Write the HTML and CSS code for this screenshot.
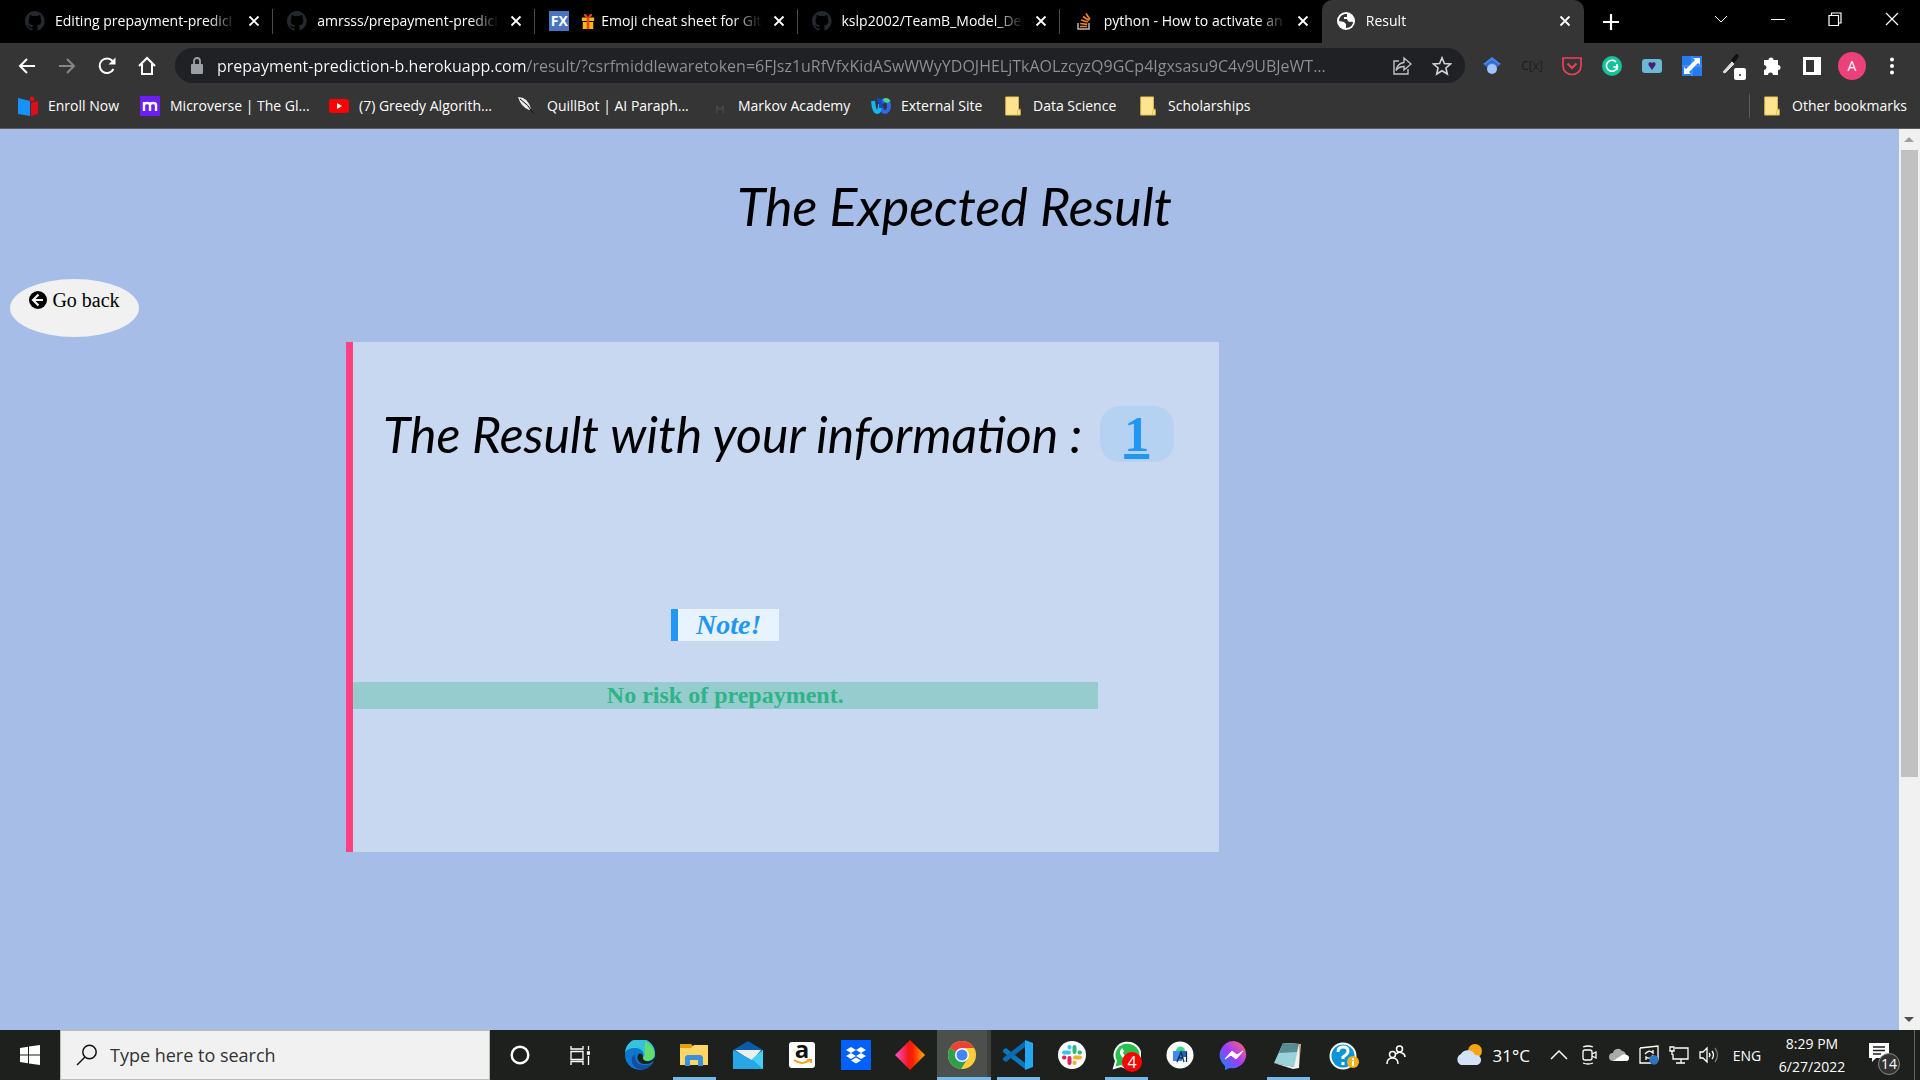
FILE: index.html
```html
<!DOCTYPE html>
<html lang="en">
<head>
<meta charset="utf-8">
<title>Result</title>
<link rel="stylesheet" href="styles.css">
</head>
<body>
<svg class="defs" aria-hidden="true">
  <symbol id="github" viewBox="0 0 16 16"><path fill="#24292f" d="M8 0C3.6 0 0 3.6 0 8c0 3.500 2.300 6.500 5.500 7.600.4.100.5-.2.5-.4v-1.500c-2 .4-2.600-.5-2.700-1-.1-.2-.5-.9-.8-1.100-.3-.1-.7-.5 0-.5.6 0 1.100.6 1.200.8.7 1.200 1.900.9 2.300.7.1-.5.3-.9.5-1.100-1.800-.2-3.600-.9-3.600-4 0-.9.3-1.600.8-2.100-.1-.2-.4-1 .1-2.100 0 0 .7-.2 2.200.8a7.500 7.500 0 0 1 4 0c1.500-1 2.200-.8 2.200-.8.4 1.100.2 1.900.1 2.100.5.5.8 1.200.8 2.100 0 3.100-1.900 3.700-3.700 3.900.3.300.6.8.6 1.500v2.200c0 .2.1.5.5.4A8 8 0 0 0 8 0"/></symbol>
  <symbol id="close" viewBox="0 0 12 12"><path d="M1.500 1.500l9 9m0-9l-9 9" fill="none" stroke="#fff" stroke-width="1.800"/></symbol>
  <symbol id="folder" viewBox="0 0 20 22"><path d="M2 1h14v14h2v6H2z" fill="#ffe48f" stroke="#e3bd4d"/><path d="M15 21v-5l3-2" fill="none" stroke="#e3bd4d"/></symbol>
</svg>

<header class="browser">
  <div class="titlebar">
    <nav class="tabs" aria-label="Tabs">
      <div class="tab"><svg class="i20"><use href="#github"/></svg><span class="title">Editing prepayment-predici</span><button aria-label="Close tab"><svg class="i12"><use href="#close"/></svg></button></div>
      <div class="tab"><svg class="i20"><use href="#github"/></svg><span class="title">amrsss/prepayment-predici</span><button aria-label="Close tab"><svg class="i12"><use href="#close"/></svg></button></div>
      <div class="tab"><span class="fx">FX</span><span class="title"><svg class="gift" viewBox="0 0 16 18"><path fill="#ffb900" d="M1 5h14v4H1zM2 10h12v8H2z"/><path fill="#e8432e" d="M6.500 5h3v13h-3zM8 5C3 5 2 0 5 1c2 .5 3 4 3 4s1-3.500 3-4c3-1 2 4-3 4"/></svg>Emoji cheat sheet for Git</span><button aria-label="Close tab"><svg class="i12"><use href="#close"/></svg></button></div>
      <div class="tab"><svg class="i20"><use href="#github"/></svg><span class="title">kslp2002/TeamB_Model_Dep</span><button aria-label="Close tab"><svg class="i12"><use href="#close"/></svg></button></div>
      <div class="tab"><svg class="i20" viewBox="0 0 20 20" fill="none"><path d="M4 12v6h11v-6" stroke="#bcbbbb" stroke-width="1.500"/><path d="M6 15.500h7M6.200 12.500l7 .8M7 9l6.800 2M9 5.500l6 4M12 2.500l4 6" stroke="#f48024" stroke-width="1.700"/></svg><span class="title">python - How to activate an</span><button aria-label="Close tab"><svg class="i12"><use href="#close"/></svg></button></div>
      <div class="tab active"><svg class="i20" viewBox="0 0 20 20"><circle cx="10" cy="10" r="9" fill="#fff"/><path d="M9 3C5 4 3 7 3 10l5 1 2 2v4c4 0 7-3 7-6l-4-1-1-2H8V6h3V3z" fill="#353535"/><path d="M10 7h5l2 3-4 1z" fill="#fff"/></svg><span class="title">Result</span><button aria-label="Close tab"><svg class="i12"><use href="#close"/></svg></button></div>
    </nav>
    <button class="newtab" aria-label="New tab"><svg class="i16" viewBox="0 0 16 16"><path d="M8 0v16M0 8h16" stroke="#fff" stroke-width="2.200"/></svg></button>
    <div class="window">
      <button aria-label="Search tabs"><svg class="i14" viewBox="0 0 14 14"><path d="M1 4l6 6 6-6" fill="none" stroke="#fff"/></svg></button>
      <button aria-label="Minimize"><svg class="i14" viewBox="0 0 14 14"><path d="M0 7.500h14" stroke="#fff"/></svg></button>
      <button aria-label="Restore"><svg class="i14" viewBox="0 0 14 14"><path d="M1 3.500h9.500V13.500H1zM3.500 3.500V1H13v10h-2.500" fill="none" stroke="#fff" stroke-width="1.200"/></svg></button>
      <button aria-label="Close"><svg class="i14" viewBox="0 0 14 14"><path d="M1 1l12 12M13 1L1 13" stroke="#fff" stroke-width="1.200"/></svg></button>
    </div>
  </div>

  <div class="toolbar">
    <button aria-label="Back"><svg class="i20" viewBox="0 0 20 20"><path d="M18 10H3M10 3l-7 7 7 7" fill="none" stroke="#fff" stroke-width="2"/></svg></button>
    <button aria-label="Forward"><svg class="i20" viewBox="0 0 20 20"><path d="M2 10h15M10 3l7 7-7 7" fill="none" stroke="#868686" stroke-width="2"/></svg></button>
    <button aria-label="Reload"><svg class="i20" viewBox="0 0 20 20"><path d="M16.500 13A7.300 7.300 0 1 1 15.500 5" fill="none" stroke="#fff" stroke-width="2"/><path d="M18.500 1.500v7h-7z" fill="#fff"/></svg></button>
    <button aria-label="Home"><svg class="i20" viewBox="0 0 20 20"><path d="M2 10l8-8 8 8M5 8v10h10V8" fill="none" stroke="#fff" stroke-width="2"/></svg></button>
    <div class="omnibox">
      <svg class="i20" viewBox="0 0 20 20"><rect x="4" y="8" width="12" height="10" rx="1" fill="#9aa0a6"/><path d="M7 8V5a3 3 0 0 1 6 0v3" fill="none" stroke="#9aa0a6" stroke-width="1.800"/></svg>
      <input class="url" type="text" aria-label="Address" value="prepayment-prediction-b.herokuapp.com/result/?csrfmiddlewaretoken=6FJsz1uRfVfxKidASwWWyYDOJHELjTkAOLzcyzQ9GCp4Igxsasu9C4v9UBJeWT...">
      <button aria-label="Share"><svg class="i20" viewBox="0 0 20 20"><path d="M7 5H2v13h14v-5M12 2l7 6-7 6v-3.500c-4 0-6 1-8 4 1-5 4-7.500 8-8z" fill="none" stroke="#bdc1c6" stroke-width="1.400"/></svg></button>
      <button aria-label="Bookmark"><svg class="i20" viewBox="0 0 20 20"><path d="M10 1.800l2.400 5.700 6.100.5-4.600 4 1.400 6L10 14.800 4.700 18l1.400-6-4.600-4 6.100-.5z" fill="none" stroke="#d2d4d7" stroke-width="1.600"/></svg></button>
    </div>
    <div class="extensions">
      <button aria-label="Scholar"><svg class="i20" viewBox="0 0 20 20"><path d="M10 1l9 7-5 3H6L1 8z" fill="#4285f4"/><circle cx="10" cy="13" r="5" fill="#a0c3ff"/><path d="M5 12a5 5 0 0 1 10 0l2-3-7-5-7 5z" fill="#356ac3"/></svg></button>
      <button aria-label="Formula" class="cx">C[x]</button>
      <button aria-label="Pocket"><svg class="i20" viewBox="0 0 20 20"><path d="M1 2h18v8a9 8.500 0 0 1-18 0z" fill="none" stroke="#ef4056" stroke-width="1.700"/><path d="M5.500 7.500L10 12l4.500-4.500" fill="none" stroke="#ef4056" stroke-width="2"/></svg></button>
      <button aria-label="Grammarly"><svg class="i20" viewBox="0 0 20 20"><circle cx="10" cy="10" r="10" fill="#15c39a"/><path d="M14 6a5.500 5.500 0 1 0 1.300 5h-4M15 8v6" fill="none" stroke="#fff" stroke-width="1.700"/></svg></button>
      <button aria-label="Video"><svg class="i20" viewBox="0 0 20 20"><rect y="3" width="20" height="14" rx="3" fill="#6bb7d6"/><path d="M6.500 7l2-1L10 7l1.500-1 2 1v2L10 14 6.500 9z" fill="#47206c"/></svg></button>
      <button aria-label="Resize"><svg class="i20" viewBox="0 0 20 20"><path d="M0 0h20v20H0z" fill="#247cf0"/><path d="M10 0v20M0 10h20" stroke="#5ba1fa"/><path d="M18 2v7l-2-2-9 9 2 2H2v-7l2 2 9-9-2-2z" fill="#fff"/></svg></button>
      <button aria-label="Color picker"><svg class="i28" viewBox="0 0 28 28"><path d="M5 20L14 10l2 2-9 9z" fill="#ddd" stroke="#ddd"/><path d="M13 8l5-6q4 0 2 4l-4 5z" fill="#111"/><rect x="16" y="16" width="12" height="12" rx="2" fill="#fff"/><circle cx="22" cy="23" r="1" fill="#222"/></svg></button>
      <button aria-label="Extensions"><svg class="i20" viewBox="0 0 20 20"><path d="M2 4h4.500a2.500 2.500 0 1 1 5 0H16v5a2.500 2.500 0 1 1 0 5v5h-5a2.500 2.500 0 0 0-5 0H2v-5a2.500 2.500 0 0 0 0-5z" fill="#fff"/></svg></button>
      <button aria-label="Side panel"><svg class="i20" viewBox="0 0 20 20"><path d="M1 1h18v18H1zM4 4v12h8V4z" fill="#fff" fill-rule="evenodd"/></svg></button>
      <button aria-label="Profile"><span class="avatar">A</span></button>
      <button aria-label="Menu"><svg class="i20" viewBox="0 0 20 20" fill="#fff"><circle cx="10" cy="3.500" r="2"/><circle cx="10" cy="10" r="2"/><circle cx="10" cy="16.500" r="2"/></svg></button>
    </div>
  </div>

  <nav class="bookmarks" aria-label="Bookmarks">
    <div class="marks">
      <a href="#"><svg class="i20" viewBox="0 0 20 20"><path d="M0 2l12 3v15L0 18z" fill="#1693fb"/><path d="M13 7l7-2v13l-7 2z" fill="#df0d18"/><circle cx="14" cy="3" r="2.500" fill="#df0d18"/></svg>Enroll Now</a>
      <a href="#"><svg class="i20" viewBox="0 0 20 20"><path d="M0 0h20v20H0z" fill="#6d1df5"/><path d="M4 15V6m0 3q0-2 3-2t3 2v6m0-6q0-2 3-2t3 2v6" fill="none" stroke="#fff" stroke-width="2.400"/></svg>Microverse | The Gl...</a>
      <a href="#"><svg class="i20" viewBox="0 0 20 20"><rect y="3" width="20" height="14" rx="3" fill="#f00"/><path d="M8 7l5 3-5 3z" fill="#fff"/></svg>(7) Greedy Algorith...</a>
      <a href="#"><svg class="i20" viewBox="0 0 20 20"><path d="M1 1q10 0 13 12l-2 1Q4 11 1 1" fill="#e8e8e8"/><path d="M3 3q8 5 14 15" fill="none" stroke="#111"/></svg>QuillBot | AI Paraph...</a>
      <a href="#"><svg class="i20" viewBox="0 0 20 20"><path d="M9 17V10l3 4 3-4v7" fill="none" stroke="#555"/></svg>Markov Academy</a>
      <a href="#"><svg class="i20" viewBox="0 0 20 20" fill="none" stroke-width="4"><ellipse cx="14" cy="10" rx="4" ry="6" stroke="#2c69f5"/><path d="M13 5q3-2 5 1" stroke="#46db89"/><path d="M2 5q1 11 4 11t3-8" stroke="#12b9ec"/><path d="M6 4q4-1 4 8" stroke="#1645c8"/></svg>External Site</a>
      <a href="#"><svg class="i20"><use href="#folder"/></svg>Data Science</a>
      <a href="#"><svg class="i20"><use href="#folder"/></svg>Scholarships</a>
    </div>
    <a href="#" class="other"><svg class="i20"><use href="#folder"/></svg>Other bookmarks</a>
  </nav>
</header>

<div class="viewport">
  <main>
    <h1>The Expected Result</h1>
    <button class="goback"><svg class="i18" viewBox="0 0 18 18"><circle cx="9" cy="9" r="9"/><path d="M9.500 3.500L4 9l5.500 5.500M4 9h10" fill="none" stroke="#f1f1f1" stroke-width="2.200"/></svg>Go back</button>
    <section class="card">
      <div class="result"><h2>The Result with your information :</h2><strong>1</strong></div>
      <div class="details">
        <p class="note">Note!</p>
        <p class="message">No risk of prepayment.</p>
      </div>
    </section>
  </main>
  <div class="scrollbar" aria-hidden="true">
    <svg class="i20" viewBox="0 0 20 20"><path d="M5 13h10l-5-5z" fill="#a0a0a0"/></svg>
    <div class="track"><div class="thumb"></div></div>
    <svg class="i20" viewBox="0 0 20 20"><path d="M5 7h10l-5 5z" fill="#505050"/></svg>
  </div>
</div>

<footer class="taskbar">
  <button class="start" aria-label="Start"><svg class="i20" viewBox="0 0 20 20" fill="#fff"><path d="M0 3l8-1.200V9.500H0zM9 1.600L20 0v9.500H9zM0 10.500h8v7.800L0 17zM9 10.500h11V20L9 18.400z"/></svg></button>
  <label class="search"><svg class="i22" viewBox="0 0 22 22"><circle cx="13.500" cy="8" r="6.700" fill="none" stroke="#111" stroke-width="1.500"/><path d="M9 13l-8 8" stroke="#111" stroke-width="1.500"/></svg><input type="text" placeholder="Type here to search" aria-label="Type here to search"></label>
  <div class="system">
    <button aria-label="Cortana"><svg class="i20" viewBox="0 0 20 20"><circle cx="10" cy="10" r="8.300" fill="none" stroke="#fff" stroke-width="2.400"/></svg></button>
    <button aria-label="Task view"><svg class="i20" viewBox="0 0 20 20" fill="none" stroke="#fff" stroke-width="1.300"><path d="M1 1v3h12V1M1 6.500h12v8H1zM1 20v-3.500h12V20M18.500 1v4M18.500 11v9"/><path d="M17.500 7h2v2h-2z" fill="#fff"/></svg></button>
  </div>
  <div class="apps">
    <button aria-label="Edge"><svg class="i30" viewBox="0 0 30 30"><circle cx="15" cy="15" r="15" fill="#0c78d0"/><path d="M0 13A15 15 0 0 1 30 14c0 5-3 7-8 7-4 0-5-2-4-4 2-5-2-9-8-9-5 0-9 2-10 5" fill="#35c2dc"/><path d="M20 2c9 3 11 13 8 16-2 3-9 4-10 1l2-3z" fill="#63df68"/><path d="M11 14c-3 8 4 14 15 10-5 8-17 7-19-2-1-5 1-7 4-8" fill="#124f9c"/><path d="M13 15c-2 4 1 9 7 9 4 0 7-1 8-3l2 2v-6l-3 3c-6 3-10 0-9-4-1-3-4-3-5-1" fill="#1d211c"/></svg></button>
    <button class="open" aria-label="File Explorer"><svg class="i30" viewBox="0 0 30 30"><path d="M1 4h11l3 3h14v18H1z" fill="#dfa111"/><path d="M1 8h11l3-3h14v20H1z" fill="#ffd566"/><path d="M6 26V17l2-2h14l2 2v9h-5v-6h-8v6z" fill="#3a91da"/></svg></button>
    <button aria-label="Mail"><svg class="i30" viewBox="0 0 30 30"><path d="M0 10L15 1l15 9v10H0z" fill="#0a5ba8"/><path d="M2 10h26l-9 11z" fill="#eee"/><path d="M0 10l19 10 11-10v19H0z" fill="#27a7e5"/><path d="M19 19l11-9v19z" fill="#45cff4"/></svg></button>
    <button aria-label="Amazon"><svg class="i30" viewBox="0 0 30 30"><rect x="2" y="2" width="26" height="26" rx="3" fill="#fff"/><text x="15" y="18" class="amazon">a</text><path d="M7 20q8 6 16 0M20 20h4v3" fill="none" stroke="#f7a01c" stroke-width="2"/></svg></button>
    <button aria-label="Dropbox"><svg class="i30" viewBox="0 0 30 30"><path d="M0 0h30v30H0z" fill="#0061fe"/><path d="M10 7l5 3-5 3-5-3zM20 7l5 3-5 3-5-3zM10 13l5 3-5 3-5-3zM20 13l5 3-5 3-5-3zM15 17.500l5 3-5 3-5-3z" fill="#fff"/></svg></button>
    <button aria-label="Diamond"><svg class="i30" viewBox="0 0 30 30"><defs><linearGradient id="dg"><stop stop-color="#ff4fd0"/><stop offset=".45" stop-color="#f01818"/><stop offset=".6" stop-color="#ff2100"/><stop offset="1" stop-color="#ffb000"/></linearGradient></defs><path d="M15 0l15 15-15 15L0 15z" fill="url(#dg)"/></svg></button>
    <button class="open current" aria-label="Chrome"><svg class="i28" viewBox="0 0 28 28"><circle cx="14" cy="14" r="14" fill="#ffcd3c"/><path d="M14 14L2 7a14 14 0 0 1 24 0z" fill="#ea4335"/><path d="M14 14L2 7a14 14 0 0 0 11 21l7-11z" fill="#2d9f4e"/><path d="M14 7h12l-6 8z" fill="#ffcd3c"/><path d="M2 7A14 14 0 0 1 26 7H14z" fill="#ea4335"/><circle cx="14" cy="14" r="7" fill="#fff"/><circle cx="14" cy="14" r="5.500" fill="#4285f4"/></svg></button>
    <button class="open" aria-label="Visual Studio Code"><svg class="i30" viewBox="0 0 30 30"><path d="M0 10l3-2 19 15v6L0 12z" fill="#0879bf"/><path d="M0 20l3 2L22 7V1L0 18z" fill="#0a6bb0"/><path d="M22 0l8 3v24l-8 3z" fill="#26a7f2"/></svg></button>
    <button aria-label="Slack"><svg class="i28" viewBox="0 0 28 28" stroke-width="4" stroke-linecap="round"><circle cx="14" cy="14" r="14" fill="#fff"/><path d="M6 11.500h5M11.500 6v.5" stroke="#36c5f0"/><path d="M16.500 6v5M22 11.500h-.5" stroke="#2eb67d"/><path d="M22 16.500h-5M16.500 22v-.5" stroke="#ecb22e"/><path d="M11.500 22v-5M6 16.500h.5" stroke="#e01e5a"/></svg></button>
    <button class="open" aria-label="WhatsApp, 4 unread"><svg class="i30" viewBox="0 0 30 30"><path d="M3 28l2-7A13 12.500 0 1 1 10 26z" fill="#2ac04f" stroke="#fff" stroke-width="2"/><path d="M11 8q-5 5 2 11t10 1l-3-3-3 1q-4-2-5-5l1-2z" fill="#fff"/></svg><span class="badge">4</span></button>
    <button aria-label="Android Studio"><svg class="i28" viewBox="0 0 28 28"><circle cx="14" cy="14" r="13.500" fill="#fff"/><path d="M10 10a4.500 4.500 0 0 1 9 0" fill="#3ddc84"/><path d="M7 10h9v10H7z" fill="#4285f4"/><path d="M16 10h5v6h-5z" fill="#2b5fc0"/><path d="M11 21l4-10 3 10M12.500 17h5M20.500 11v10" fill="none" stroke="#073042" stroke-width="1.300"/></svg></button>
    <button aria-label="Messenger"><svg class="i30" viewBox="0 0 30 30"><defs><linearGradient id="mg" x1="0" y1="1" x2="1" y2="0"><stop stop-color="#0a8cff"/><stop offset=".5" stop-color="#a13bff"/><stop offset="1" stop-color="#ff6b63"/></linearGradient></defs><path d="M15 1a14 13.500 0 1 1-4 27l-5 2v-4A14 14 0 0 1 15 1" fill="url(#mg)"/><path d="M6 19l7-8 5 4 6-4-7 8-5-4z" fill="#fff" stroke="#fff"/></svg></button>
    <button class="open" aria-label="Notepad"><svg class="i30" viewBox="0 0 30 30"><path d="M12 3l16 1-2 24-5-1z" fill="#ceb488"/><path d="M10 3l16 1-5 23L1 23z" fill="#9ad2d9"/><path d="M10 3l16 1-2 8L6 13z" fill="#558b94"/><path d="M1 23l20 4 5-23v24l-6 1z" fill="#e8f4f5"/></svg></button>
    <button class="help" aria-label="Help"><svg class="i30" viewBox="0 0 30 30"><circle cx="14" cy="16" r="12.500" fill="#0a95d8" stroke="#fff" stroke-width="2"/><path d="M9 12q0-5 5-5t5 4q0 3-5 6v2M14 22v3" fill="none" stroke="#fff" stroke-width="3"/><circle cx="24" cy="22" r="6" fill="#f5b21c"/><path d="M24 18v2m0 1v5" stroke="#fff" stroke-width="2"/></svg></button>
    <button class="people" aria-label="People"><svg class="i20" viewBox="0 0 20 20" fill="none" stroke="#fff" stroke-width="1.500"><circle cx="6.500" cy="9.500" r="3"/><path d="M1 19q0-6 5.500-6t5.500 6"/><circle cx="13.500" cy="4" r="3"/><path d="M10 9q3-3 6-1 3 1 3 4"/></svg></button>
  </div>
  <div class="tray">
    <button class="weather"><svg class="i28" viewBox="0 0 28 28"><circle cx="20" cy="10" r="7" fill="#f8a511"/><path d="M6 24a6 6 0 0 1 0-11 8 8 0 0 1 14 1 5 5 0 0 1 2 10z" fill="#d4e2f8"/></svg>31°C</button>
    <div class="status">
      <button aria-label="Hidden icons"><svg class="i20" viewBox="0 0 20 20"><path d="M2 14l8-8 8 8" fill="none" stroke="#fff" stroke-width="1.500"/></svg></button>
      <button aria-label="Meet now"><svg class="i20" viewBox="0 0 20 20" fill="none" stroke="#fff" stroke-width="1.300"><rect x="4" y="5" width="9" height="10" rx="2"/><path d="M13 9l4-2v6l-4-2M4 2q5-2 10 0M4 18q5 2 10 0"/></svg></button>
      <button aria-label="OneDrive"><svg class="i20" viewBox="0 0 20 20"><path d="M4 16a4 4 0 0 1 0-8 5 5 0 0 1 9-2q3 0 4 4a3 3 0 0 1 0 6z" fill="#aaa"/><path d="M4 16l9-6q4-2 7 2 0 4-3 4z" fill="#fff"/></svg></button>
      <button aria-label="Update"><svg class="i20" viewBox="0 0 20 20" fill="none" stroke="#fff" stroke-width="1.300"><path d="M1 3l18-2v14M1 3v15h11M6 9q4-5 8-1V5M14 10q-3 5-7 2v3"/><circle cx="15" cy="15" r="4" fill="#2c75c4" stroke="#2c75c4"/></svg></button>
      <button aria-label="Network"><svg class="i20" viewBox="0 0 20 20" fill="none" stroke="#fff" stroke-width="1.300"><path d="M6 3h13v11H4V9M12 14v4M7 18h9M1 2h4v4H1zM3 6v4"/></svg></button>
      <button aria-label="Volume"><svg class="i20" viewBox="0 0 20 20" fill="none" stroke="#fff" stroke-width="1.300"><path d="M1 7h3l4-4v14l-4-4H1zM10 8q2 2 0 4M13 6q3 4 0 8"/><path d="M16 3q5 7 0 14" stroke="#777"/></svg></button>
    </div>
    <button class="lang">ENG</button>
    <button class="clock"><time>8:29 PM</time><time>6/27/2022</time></button>
    <button class="notify" aria-label="14 notifications"><svg class="i22" viewBox="0 0 22 22"><path d="M1 2h20v15H8l-4 4v-4H1z" fill="#fff"/><path d="M5 6h12M5 9.500h12M5 13h8" stroke="#1d1d1d" stroke-width="1.300"/></svg><span class="count">14</span></button>
  </div>
</footer>
</body>
</html>
```
FILE: styles.css
```css
* { box-sizing: border-box; }
body {
  margin: 0;
  min-height: 100vh;
  display: flex;
  flex-direction: column;
  background: #a6bde7;
  font-family: "Open Sans", sans-serif;
  font-size: 14px;
  color: #fff;
}
button, input { font: inherit; color: inherit; border: 0; padding: 0; background: none; }
button { display: flex; align-items: center; justify-content: center; }
a { color: inherit; text-decoration: none; }
svg { display: block; flex: none; }
.defs { width: 0; height: 0; position: absolute; }
.i12 { width: 12px; height: 12px; }
.i14 { width: 14px; height: 14px; }
.i16 { width: 16px; height: 16px; }
.i18 { width: 18px; height: 18px; }
.i20 { width: 20px; height: 20px; }
.i22 { width: 22px; height: 22px; }
.i28 { width: 28px; height: 28px; }
.i30 { width: 30px; height: 30px; }

/* Browser frame */
.browser { background: #353535; border-bottom: 1px solid #5b5b5b; }
.titlebar { display: flex; height: 43px; background: #000; padding-left: 11px; }
.tabs { display: flex; flex: 0 1 1573px; min-width: 0; }
.tab {
  flex: 1 1 0;
  min-width: 0;
  display: flex;
  align-items: center;
  padding: 0 10px 2px 14px;
  position: relative;
}
.tab::after { content: ""; position: absolute; right: 0; top: 9px; width: 1px; height: 25px; background: #4a4a4a; }
.tab:nth-last-child(-n+2)::after { display: none; }
.tab.active { background: #353535; border-radius: 10px 10px 0 0; }
.title {
  flex: 1;
  min-width: 0;
  margin: 0 4px 0 10px;
  display: flex;
  align-items: center;
  white-space: nowrap;
  overflow: hidden;
  -webkit-mask-image: linear-gradient(90deg, #000 82%, transparent 98%);
  mask-image: linear-gradient(90deg, #000 82%, transparent 98%);
}
.gift { width: 14px; height: 16px; margin: 0 6px 0 2px; }
.fx { width: 20px; height: 20px; background: #4b74c0; font-weight: 700; line-height: 20px; text-align: center; }
.tab button { width: 18px; height: 20px; }
.newtab { width: 54px; }
.window { display: flex; margin-left: auto; padding-bottom: 6px; }
.window button { width: 57px; }

.toolbar { display: flex; align-items: center; height: 44px; padding: 1px 8px 0 7px; }
.toolbar button { flex: none; width: 40px; height: 35px; }
.omnibox {
  flex: 1;
  min-width: 0;
  height: 35px;
  display: flex;
  align-items: center;
  margin: 0 7px 0 8px;
  padding: 0 3px 0 12px;
  border-radius: 18px;
  background: #202124;
}
.url {
  flex: 1;
  min-width: 0;
  margin-left: 10px;
  font-size: 16px;
  text-overflow: ellipsis;
  background: linear-gradient(90deg, #fff 309px, #8e9196 309px);
  -webkit-background-clip: text;
  background-clip: text;
  color: transparent;
}
.extensions { display: flex; }
.cx { font-size: 12px; color: #1c1f22; }
.avatar { width: 28px; height: 28px; border-radius: 50%; background: #ec407a; line-height: 28px; text-align: center; }

.bookmarks { display: flex; align-items: center; justify-content: space-between; height: 41px; padding: 0 13px 4px 18px; }
.marks { display: grid; grid-template-columns: 122px 189px 188px 191px 163px 132px 135px auto; }
.bookmarks a { display: flex; align-items: center; gap: 10px; white-space: nowrap; line-height: 24px; }
.other { border-left: 1px solid #5b5b5b; padding-left: 12px; }

/* Page */
.viewport { flex: 1; display: flex; }
main { flex: 1; min-width: 0; padding: 47px 0 60px 10px; color: #000; font-family: "Liberation Serif", serif; }
h1, h2 { margin: 0; font-family: Lato, cursive; font-style: italic; font-weight: 400; line-height: 60px; color: #000; white-space: nowrap; }
h1 { font-size: 52px; text-align: center; }
h2 { font-size: 50px; }
.goback {
  margin-top: 43px;
  width: 129px;
  height: 58px;
  padding-bottom: 16px;
  gap: 5px;
  border-radius: 50%;
  background: #f1f1f1;
  font-size: 20px;
}
.card { margin: 5px 0 0 336px; width: 46.2%; padding: 62px 0 143px; border-left: 7px solid #ff4081; background: #c9d8f1; }
.result { display: flex; align-items: center; justify-content: space-between; padding: 0 45px 0 30px; }
.result strong { flex: none; width: 74px; border-radius: 20px; background: #b5d2f2; color: #2196f3; font-size: 50px; line-height: 56px; text-align: center; text-decoration: underline; }
.details { width: 86%; display: flex; flex-direction: column; align-items: center; padding-top: 145px; }
.details p { margin: 0; font-weight: 700; }
.note { padding: 0 18px; border-left: 7px solid #2196f3; background: #e7f3fe; color: #2196f3; font-size: 28px; font-style: italic; line-height: 32px; }
.details .message { align-self: stretch; margin-top: 41px; background: #97cccf; color: #2eb487; font-size: 24px; line-height: 27px; text-align: center; }
.scrollbar { width: 21px; display: flex; flex-direction: column; background: #f1f1f1; }
.track { flex: 1; padding: 1px 2px; }
.thumb { height: 73%; background: #c1c1c1; }

/* Taskbar */
.taskbar { display: flex; height: 50px; background: #1d201d; }
.taskbar button { flex: none; height: 50px; }
.start { width: 60px; }
.search { flex: none; width: 430px; display: flex; align-items: center; gap: 12px; padding: 0 15px; background: #f1f1f1; border: 1px solid #bbb; }
.search input { flex: 1; min-width: 0; font-size: 18px; }
.search input::placeholder { color: #333; opacity: 1; }
.system { display: flex; }
.system button { width: 60px; }
.apps { display: flex; padding-left: 3px; }
.apps button { width: 54px; position: relative; }
.apps .open::after { content: ""; position: absolute; bottom: 0; left: 6px; right: 5px; height: 3px; background: #76b9ed; }
.apps .current { background: #4c504d; border-right: 4px solid #3d403e; }
.apps .current::after { left: 0; right: -4px; }
.apps .help { width: 58px; }
.apps .people { width: 46px; }
.amazon { font: 700 24px "Open Sans", sans-serif; fill: #111; text-anchor: middle; }
.badge { position: absolute; right: 11px; bottom: 8px; width: 20px; height: 20px; border-radius: 50%; background: #f00; font-size: 16px; line-height: 20px; text-align: center; }
.tray { display: flex; margin-left: auto; padding-right: 5px; }
.weather { gap: 10px; font-size: 17px; margin-right: 14px; }
.status { display: flex; }
.status button { width: 30px; }
.lang { width: 46px; }
.taskbar .clock { flex-direction: column; width: 84px; margin-right: 12px; }
.clock time { line-height: 23px; }
.taskbar .notify { width: 49px; padding: 0 22px 6px 0; position: relative; border-right: 1px solid #666; }
.count { position: absolute; right: 14px; bottom: 5px; width: 22px; height: 22px; border: 1px solid #888; border-radius: 50%; background: #333; line-height: 20px; text-align: center; }
```
